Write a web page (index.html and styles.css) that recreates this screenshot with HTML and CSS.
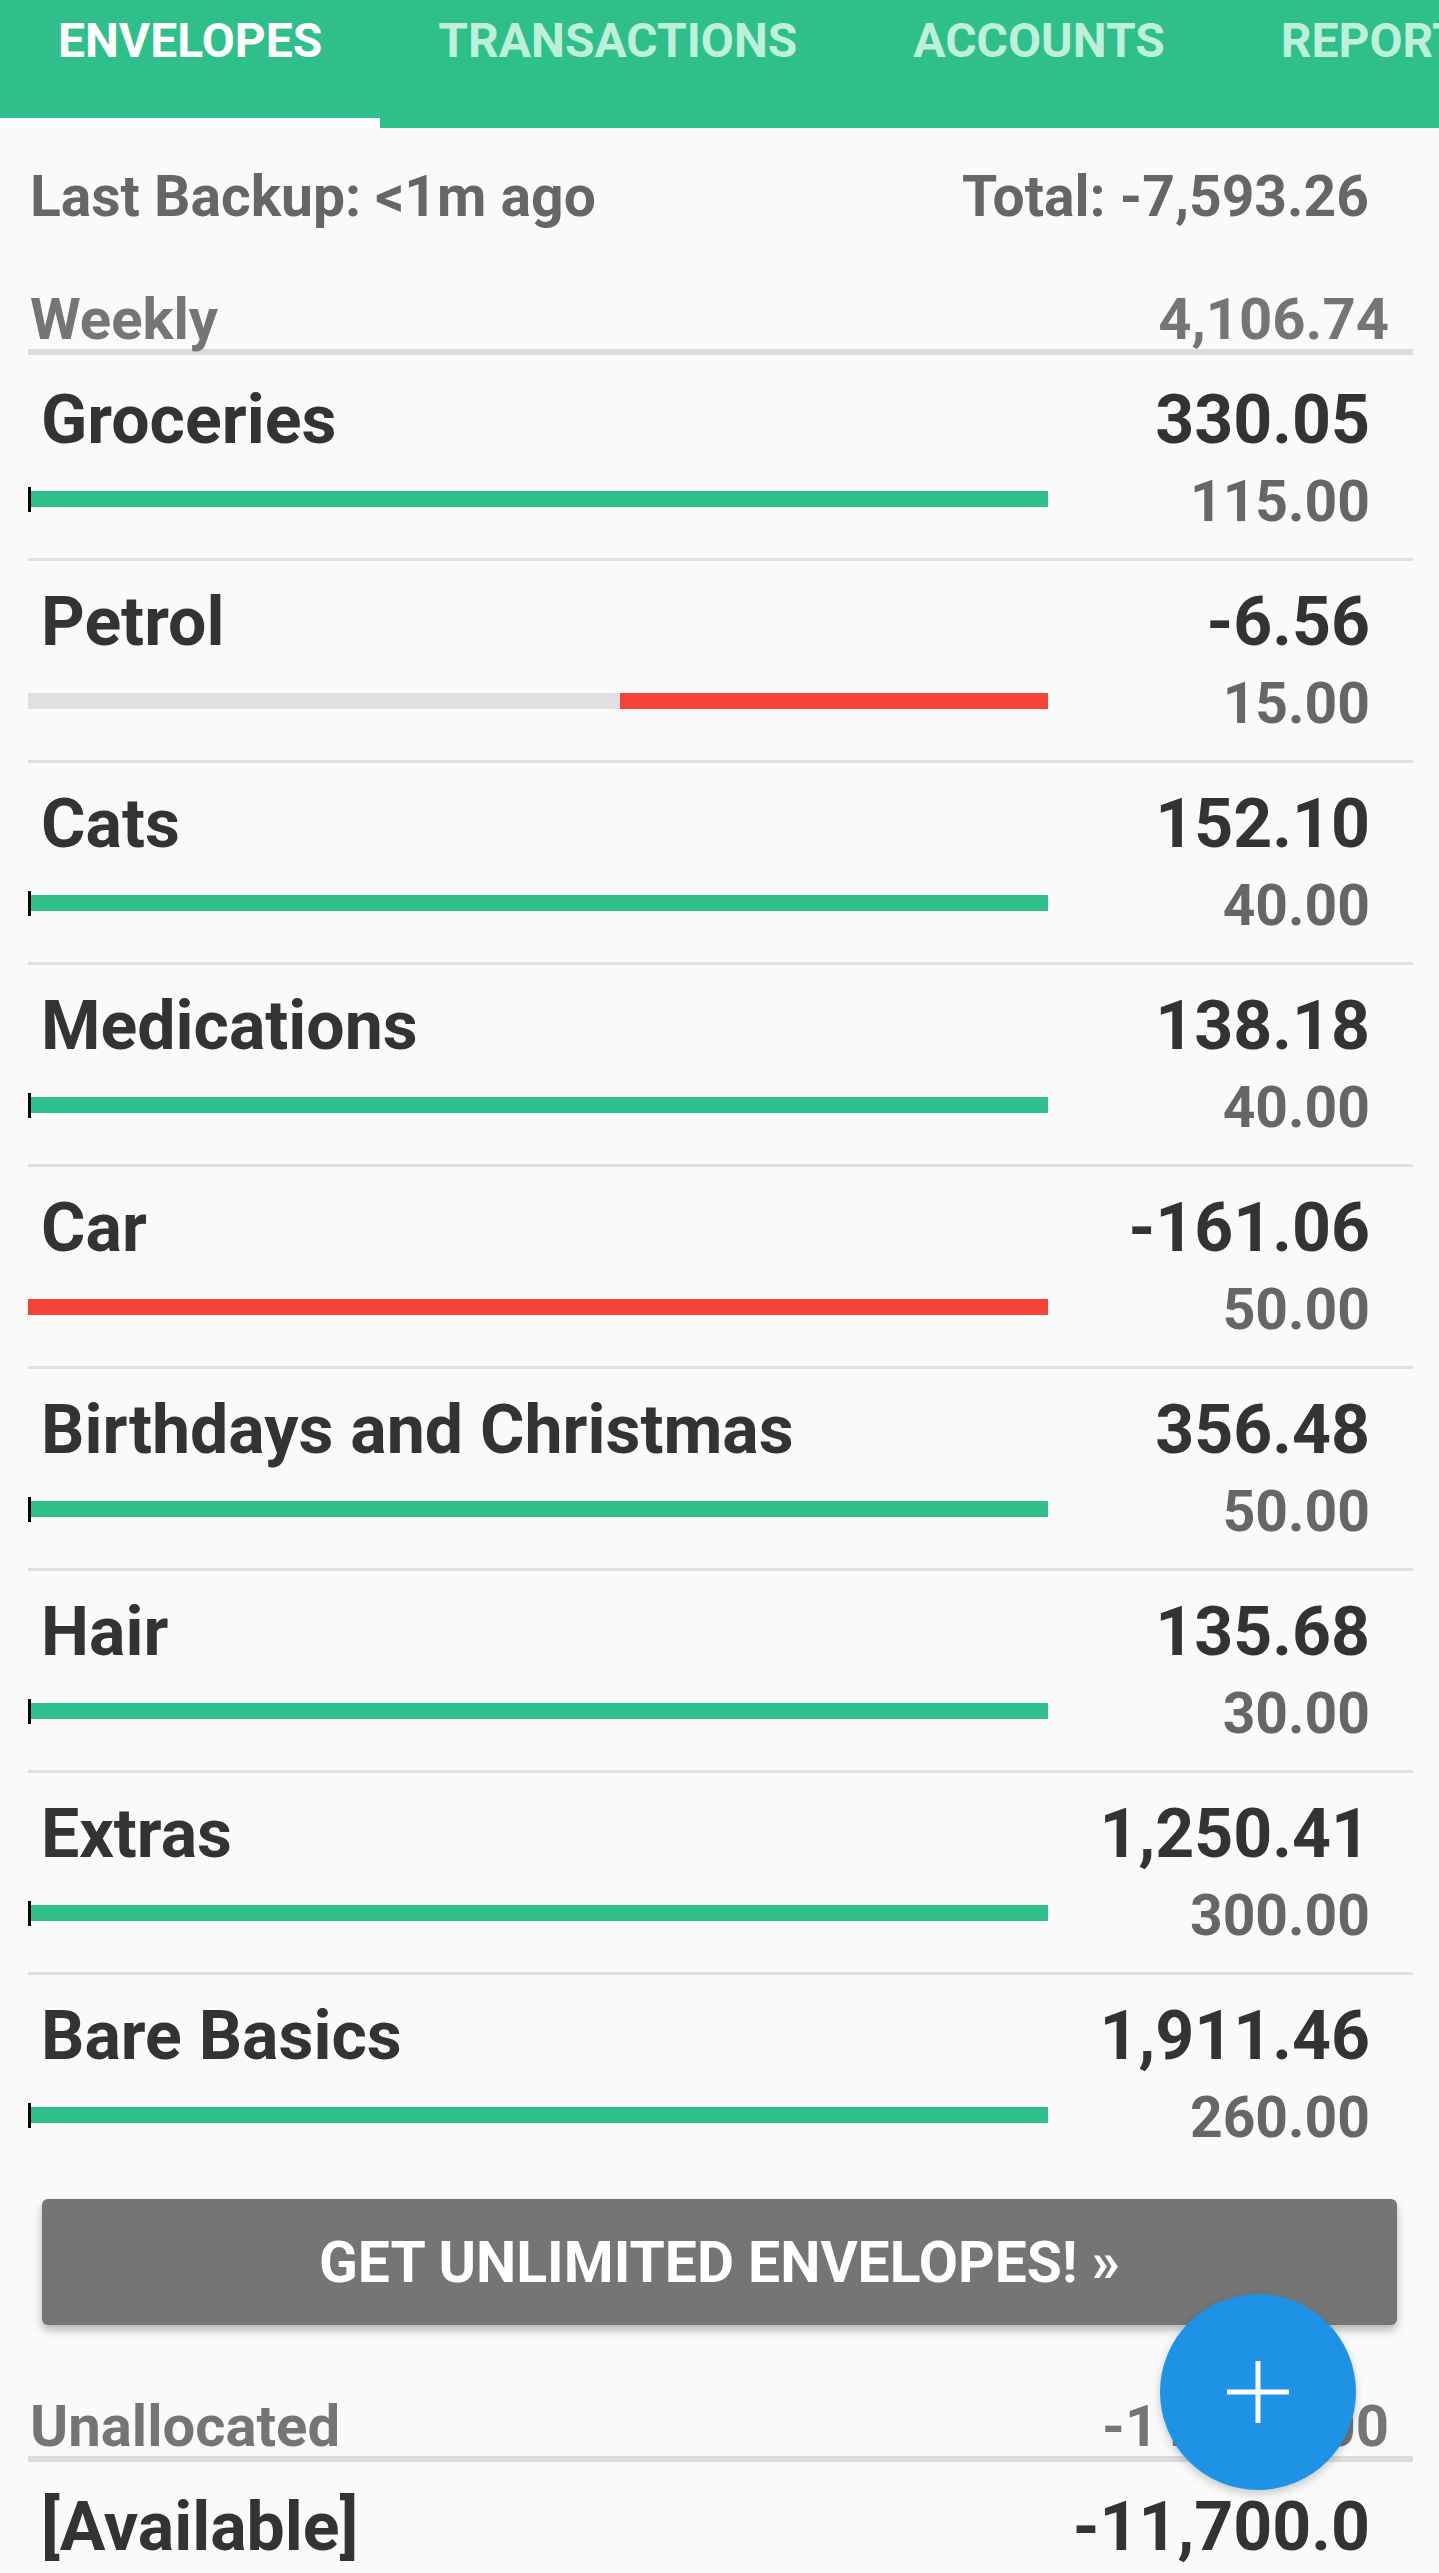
FILE: index.html
```html
<!DOCTYPE html>
<html lang="en">
<head>
  <meta charset="UTF-8">
  <meta name="viewport" content="width=device-width, initial-scale=1.0">
  <title>Envelopes</title>
  <link rel="stylesheet" href="styles.css">
</head>
<body>
  <div class="screen">
    <nav class="tabs">
      <div class="tab active">ENVELOPES</div>
      <div class="tab">TRANSACTIONS</div>
      <div class="tab">ACCOUNTS</div>
      <div class="tab">REPORTS</div>
    </nav>

    <div class="info">
      <span>Last Backup: &lt;1m ago</span>
      <span>Total: -7,593.26</span>
    </div>

    <div class="group-head">
      <span>Weekly</span>
      <span>4,106.74</span>
    </div>

    <div class="envelope">
      <div class="env-top"><span>Groceries</span><span>330.05</span></div>
      <div class="env-bottom"><div class="bar full"></div><span class="budget">115.00</span></div>
    </div>
    <div class="envelope">
      <div class="env-top"><span>Petrol</span><span>-6.56</span></div>
      <div class="env-bottom"><div class="bar over"><div class="bar-red" style="width: 42%"></div></div><span class="budget">15.00</span></div>
    </div>
    <div class="envelope">
      <div class="env-top"><span>Cats</span><span>152.10</span></div>
      <div class="env-bottom"><div class="bar full"></div><span class="budget">40.00</span></div>
    </div>
    <div class="envelope">
      <div class="env-top"><span>Medications</span><span>138.18</span></div>
      <div class="env-bottom"><div class="bar full"></div><span class="budget">40.00</span></div>
    </div>
    <div class="envelope">
      <div class="env-top"><span>Car</span><span>-161.06</span></div>
      <div class="env-bottom"><div class="bar over"><div class="bar-red" style="width: 100%"></div></div><span class="budget">50.00</span></div>
    </div>
    <div class="envelope">
      <div class="env-top"><span>Birthdays and Christmas</span><span>356.48</span></div>
      <div class="env-bottom"><div class="bar full"></div><span class="budget">50.00</span></div>
    </div>
    <div class="envelope">
      <div class="env-top"><span>Hair</span><span>135.68</span></div>
      <div class="env-bottom"><div class="bar full"></div><span class="budget">30.00</span></div>
    </div>
    <div class="envelope">
      <div class="env-top"><span>Extras</span><span>1,250.41</span></div>
      <div class="env-bottom"><div class="bar full"></div><span class="budget">300.00</span></div>
    </div>
    <div class="envelope last">
      <div class="env-top"><span>Bare Basics</span><span>1,911.46</span></div>
      <div class="env-bottom"><div class="bar full"></div><span class="budget">260.00</span></div>
    </div>

    <button class="upgrade">GET UNLIMITED ENVELOPES! &raquo;</button>

    <div class="group-head unalloc">
      <span>Unallocated</span>
      <span>-11,700.00</span>
    </div>

    <div class="envelope last">
      <div class="env-top"><span>[Available]</span><span>-11,700.0</span></div>
    </div>

    <button class="fab" aria-label="Add">
      <svg width="62" height="62" viewBox="0 0 62 62"><path d="M31 0v62M0 31h62" stroke="#fff" stroke-width="5"/></svg>
    </button>
  </div>
</body>
</html>
```

FILE: styles.css
```css
body { margin: 0; background: #fafafa; font-family: Roboto, "Noto Sans", sans-serif; }
.screen { position: relative; height: 2573px; overflow: hidden; }

.tabs { display: flex; height: 128px; background: #2ebf8b; white-space: nowrap; overflow: hidden; }
.tab { box-sizing: border-box; height: 128px; padding: 13px 58px 0; font-size: 48px; line-height: 56px; font-weight: 700; color: #bdf0da; flex: none; }
.tab.active { color: #fff; border-bottom: 10px solid #fff; }

.info { display: flex; justify-content: space-between; margin-top: 34px; padding: 0 70px 0 30px; font-size: 57px; line-height: 70px; font-weight: 700; color: #666; }

.group-head { display: flex; justify-content: space-between; margin: 58px 26px 4px 28px; padding: 0 24px 0 2px; font-size: 58px; line-height: 59px; font-weight: 700; color: #757575; border-bottom: 6px solid #dcdcdc; }
.group-head.unalloc { margin-top: 72px; }

.envelope { margin: 0 26px 0 28px; padding: 21px 43px 26px 0; border-bottom: 3px solid #e0e0e0; color: #333; font-weight: 700; }
.envelope.last { border-bottom: none; }
.env-top { display: flex; justify-content: space-between; font-size: 68px; line-height: 80px; padding-left: 13px; white-space: nowrap; }
.env-bottom { display: flex; justify-content: space-between; align-items: flex-start; margin-top: 12px; height: 60px; }
.bar { position: relative; width: 1020px; height: 16px; margin-top: 19px; background: #e0e0e0; }
.bar.full { background: #2ebf8b; }
.bar.full::before { content: ""; position: absolute; left: 0; top: -4px; width: 3px; height: 25px; background: #000; }
.bar-red { height: 100%; margin-left: auto; background: #f44336; }
.budget { font-size: 57px; line-height: 60px; color: #666; }

.upgrade { display: block; box-sizing: border-box; width: 1355px; height: 126px; margin: 25px 0 0 42px; border: none; border-radius: 6px; background: #757575; color: #fff; font-family: inherit; font-size: 57px; font-weight: 700; box-shadow: 0 5px 8px rgba(0, 0, 0, 0.28); }

.fab { position: absolute; right: 83px; bottom: 83px; width: 196px; height: 196px; border: none; border-radius: 50%; background: #1e93e6; display: flex; align-items: center; justify-content: center; padding: 0; box-shadow: 0 4px 10px rgba(0, 0, 0, 0.2); }
```
